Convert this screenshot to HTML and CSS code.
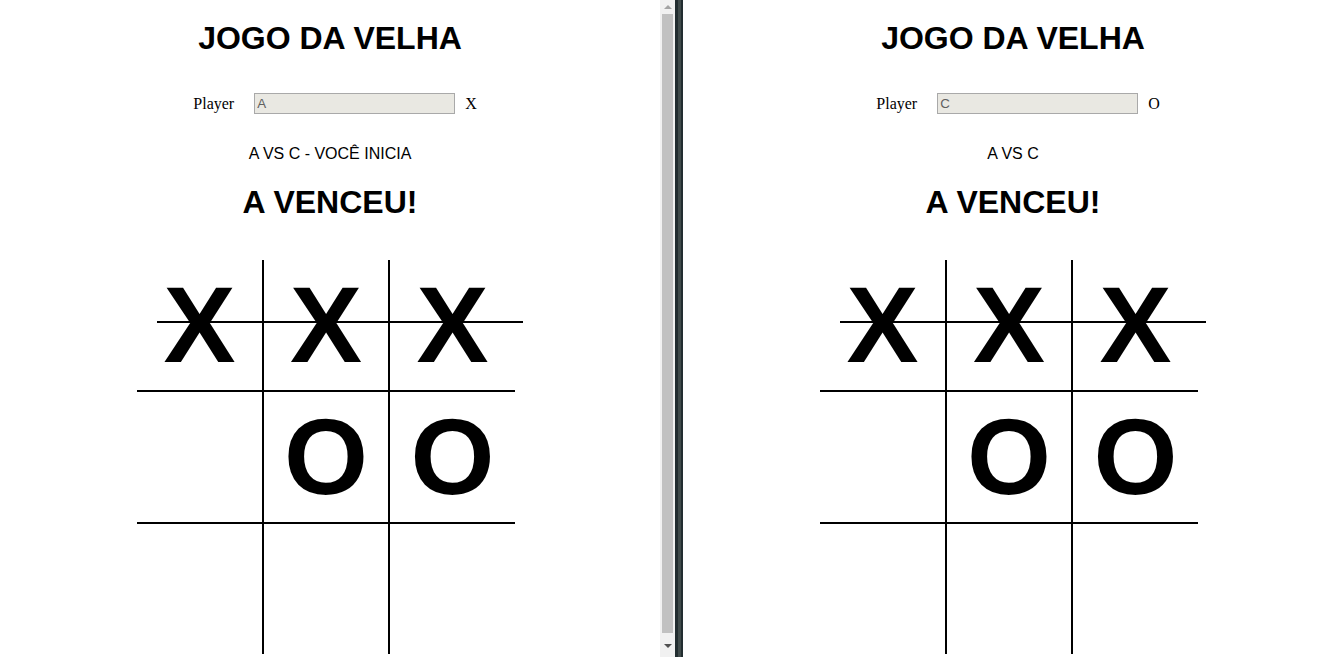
FILE: index.html
```html
<!DOCTYPE html>
<html lang="pt">
<head>
<meta charset="utf-8">
<title>Jogo da Velha</title>
<link rel="stylesheet" href="styles.css">
</head>
<body>
<div class="screen">
  <section class="pane">
    <div class="game">
      <h1 class="title">JOGO DA VELHA</h1>
      <div class="player-row">
        <span class="label">Player</span>
        <input class="name" type="text" value="A" readonly>
        <span class="mark">X</span>
      </div>
      <p class="status">A VS C - VOCÊ INICIA</p>
      <h2 class="result">A VENCEU!</h2>
      <div class="board-wrap">
        <div class="board">
          <div class="cell c1 r1">X</div>
          <div class="cell c2 r1">X</div>
          <div class="cell c3 r1">X</div>
          <div class="cell c1 r2"></div>
          <div class="cell c2 r2">O</div>
          <div class="cell c3 r2">O</div>
          <div class="cell c1 r3"></div>
          <div class="cell c2 r3"></div>
          <div class="cell c3 r3"></div>
          <div class="strike"></div>
        </div>
      </div>
    </div>
  </section>
  <div class="scrollbar">
    <div class="sb-btn"><span class="arrow-up"></span></div>
    <div class="sb-track"><div class="sb-thumb"></div></div>
    <div class="sb-btn"><span class="arrow-down"></span></div>
  </div>
  <div class="divider"><span class="div-dark"></span><span class="div-mid"></span><span class="div-dark"></span></div>
  <section class="pane pane-right">
    <div class="game">
      <h1 class="title">JOGO DA VELHA</h1>
      <div class="player-row">
        <span class="label">Player</span>
        <input class="name" type="text" value="C" readonly>
        <span class="mark">O</span>
      </div>
      <p class="status">A VS C</p>
      <h2 class="result">A VENCEU!</h2>
      <div class="board-wrap">
        <div class="board">
          <div class="cell c1 r1">X</div>
          <div class="cell c2 r1">X</div>
          <div class="cell c3 r1">X</div>
          <div class="cell c1 r2"></div>
          <div class="cell c2 r2">O</div>
          <div class="cell c3 r2">O</div>
          <div class="cell c1 r3"></div>
          <div class="cell c2 r3"></div>
          <div class="cell c3 r3"></div>
          <div class="strike"></div>
        </div>
      </div>
    </div>
  </section>
</div>
</body>
</html>
```

FILE: styles.css
```css
html, body {
  margin: 0;
  padding: 0;
  background: #ffffff;
}

.screen {
  display: flex;
  width: 1344px;
  height: 657px;
  overflow: hidden;
}

.pane {
  width: 660px;
  height: 657px;
  overflow: hidden;
  background: #ffffff;
  flex: none;
}

.pane-right {
  width: 661px;
}

.game {
  width: 660px;
  display: flex;
  flex-direction: column;
  align-items: stretch;
  color: #000000;
}

.title {
  margin: 20px 0 0;
  font: bold 32px/37px "Liberation Sans", Arial, sans-serif;
  text-align: center;
}

.player-row {
  margin-top: 36px;
  height: 21px;
  padding-left: 10px;
  display: flex;
  justify-content: center;
  align-items: center;
  font: 16px/18px "Liberation Serif", "Times New Roman", serif;
}

.label {
  margin-right: 20px;
}

.name {
  box-sizing: border-box;
  width: 201px;
  height: 21px;
  margin: 0;
  padding: 0 2px;
  border: 1px solid #a9a9a9;
  background: #e9e8e2;
  color: #606060;
  font: 13.33px "Liberation Sans", Arial, sans-serif;
  outline: none;
}

.mark {
  margin-left: 10px;
}

.status {
  margin: 31px 0 0;
  font: 16px/18px "Liberation Sans", Arial, sans-serif;
  text-align: center;
}

.result {
  margin: 21px 0 0;
  font: bold 32px/37px "Liberation Sans", Arial, sans-serif;
  text-align: center;
}

.board-wrap {
  margin-top: 39px;
  display: flex;
  justify-content: center;
}

.board {
  position: relative;
  margin-right: 8px;
  display: grid;
  grid-template-columns: 127px 126px 125px;
  grid-template-rows: 132px 132px 130px;
}

.cell {
  box-sizing: border-box;
  display: flex;
  align-items: center;
  justify-content: center;
  font: bold 108px/1 "Liberation Sans", Arial, sans-serif;
  color: #000000;
}

.c1, .c2 {
  border-right: 2px solid #000000;
}

.r1, .r2 {
  border-bottom: 2px solid #000000;
}

.strike {
  position: absolute;
  left: 20px;
  top: 61px;
  width: 366px;
  height: 2px;
  background: #000000;
}

.scrollbar {
  width: 15px;
  height: 657px;
  flex: none;
  background: #f1f1f1;
  display: flex;
  flex-direction: column;
}

.sb-btn {
  height: 14px;
  display: flex;
  align-items: center;
  justify-content: center;
  flex: none;
}

.sb-track {
  flex: 1;
  padding: 0 2px 18px 2px;
  display: flex;
}

.sb-thumb {
  flex: 1;
  background: #c1c1c1;
}

.arrow-up {
  width: 0;
  height: 0;
  border-left: 4px solid transparent;
  border-right: 4px solid transparent;
  border-bottom: 4px solid #a3a3a3;
}

.arrow-down {
  width: 0;
  height: 0;
  border-left: 4px solid transparent;
  border-right: 4px solid transparent;
  border-top: 4px solid #505050;
  margin-bottom: 2px;
}

.scrollbar .sb-btn:last-child {
  height: 20px;
  margin-top: -14px;
}

.divider {
  width: 8px;
  height: 657px;
  flex: none;
  display: flex;
}

.div-dark {
  width: 3px;
  background: #222d30;
}

.div-dark:last-child {
  width: 2px;
}

.div-mid {
  width: 3px;
  background: #3f4a4a;
}
```
